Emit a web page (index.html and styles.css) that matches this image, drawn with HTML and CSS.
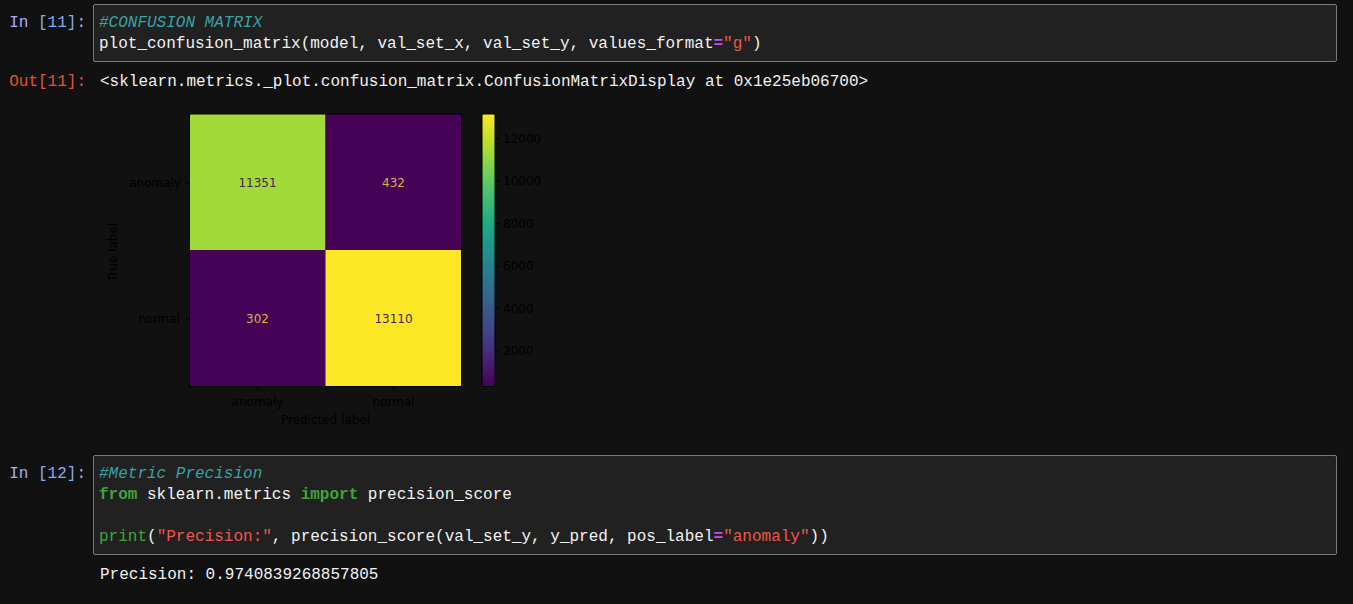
FILE: index.html
```html
<!DOCTYPE html>
<html>
<head>
<meta charset="utf-8">
<link rel="stylesheet" href="styles.css">
</head>
<body>
<div class="notebook">
  <div class="cell first">
    <div class="row">
      <div class="prompt in"><span class="pin">In </span><span class="pnum">[11]</span><span class="pin">:</span></div>
      <div class="input"><pre class="code"><span class="cm">#CONFUSION MATRIX</span>
plot_confusion_matrix(model, val_set_x, val_set_y, values_format<span class="op">=</span><span class="st">"g"</span>)</pre></div>
    </div>
    <div class="row outrow">
      <div class="prompt out">Out[11]:</div>
      <div class="output"><pre class="text">&lt;sklearn.metrics._plot.confusion_matrix.ConfusionMatrixDisplay at 0x1e25eb06700&gt;</pre></div>
    </div>
    <div class="row">
      <div class="prompt"></div>
      <div class="output">
        <svg class="plot" width="460" height="340" viewBox="100 96 460 340" xmlns="http://www.w3.org/2000/svg">
          <defs>
            <linearGradient id="viridis" x1="0" y1="1" x2="0" y2="0">
              <stop offset="0" stop-color="#440154"/>
              <stop offset="0.1" stop-color="#482475"/>
              <stop offset="0.2" stop-color="#414487"/>
              <stop offset="0.3" stop-color="#355f8d"/>
              <stop offset="0.4" stop-color="#2a788e"/>
              <stop offset="0.5" stop-color="#21918c"/>
              <stop offset="0.6" stop-color="#22a884"/>
              <stop offset="0.7" stop-color="#44bf70"/>
              <stop offset="0.8" stop-color="#7ad151"/>
              <stop offset="0.9" stop-color="#bddf26"/>
              <stop offset="1" stop-color="#fde725"/>
            </linearGradient>
          </defs>
          <rect x="189.5" y="114" width="136" height="136" fill="#a2da3a"/>
          <rect x="325.5" y="114" width="136" height="136" fill="#450256"/>
          <rect x="189.5" y="250" width="136" height="136.5" fill="#450256"/>
          <rect x="325.5" y="250" width="136" height="136.5" fill="#fde725"/>
          <rect x="189.5" y="114" width="272" height="272.5" fill="none" stroke="#000" stroke-width="1"/>
          <g class="num">
            <text x="257.5" y="183" fill="#4a1e5a">11351</text>
            <text x="393.5" y="183" fill="#d9b14a">432</text>
            <text x="257.5" y="319" fill="#d9b14a">302</text>
            <text x="393.5" y="319" fill="#4a1e5a">13110</text>
          </g>
          <g stroke="#000" stroke-width="1">
            <line x1="185.5" y1="183" x2="189.5" y2="183"/>
            <line x1="185.5" y1="319" x2="189.5" y2="319"/>
            <line x1="257.5" y1="386.5" x2="257.5" y2="390.5"/>
            <line x1="393.5" y1="386.5" x2="393.5" y2="390.5"/>
          </g>
          <g class="lbl">
            <text x="181" y="183" text-anchor="end">anomaly</text>
            <text x="180" y="319" text-anchor="end">normal</text>
            <text x="257.5" y="401.5" text-anchor="middle">anomaly</text>
            <text x="393.5" y="401.5" text-anchor="middle">normal</text>
            <text x="325.5" y="419.5" text-anchor="middle">Predicted label</text>
            <text x="112.5" y="252" text-anchor="middle" transform="rotate(-90 112.5 252)">True label</text>
          </g>
          <rect x="482" y="114" width="13" height="272.5" fill="url(#viridis)" stroke="#000" stroke-width="1"/>
          <g stroke="#000" stroke-width="1">
            <line x1="495" y1="138.5" x2="499" y2="138.5"/>
            <line x1="495" y1="181" x2="499" y2="181"/>
            <line x1="495" y1="223.5" x2="499" y2="223.5"/>
            <line x1="495" y1="266" x2="499" y2="266"/>
            <line x1="495" y1="308.5" x2="499" y2="308.5"/>
            <line x1="495" y1="351" x2="499" y2="351"/>
          </g>
          <g class="lbl">
            <text x="503" y="138.5">12000</text>
            <text x="503" y="181">10000</text>
            <text x="503" y="223.5">8000</text>
            <text x="503" y="266">6000</text>
            <text x="503" y="308.5">4000</text>
            <text x="503" y="351">2000</text>
          </g>
        </svg>
      </div>
    </div>
  </div>

  <div class="cell second">
    <div class="row">
      <div class="prompt in"><span class="pin">In </span><span class="pnum">[12]</span><span class="pin">:</span></div>
      <div class="input"><pre class="code"><span class="cm">#Metric Precision</span>
<span class="kw">from</span> sklearn.metrics <span class="kw">import</span> precision_score

<span class="bi">print</span>(<span class="st">"Precision:"</span>, precision_score(val_set_y, y_pred, pos_label<span class="op">=</span><span class="st">"anomaly"</span>))</pre></div>
    </div>
    <div class="row outrow last">
      <div class="prompt"></div>
      <div class="output"><pre class="text">Precision: 0.9740839268857805</pre></div>
    </div>
  </div>
</div>
</body>
</html>
```
FILE: styles.css
```css
html, body {
  margin: 0;
  padding: 0;
  background: #111111;
}

.notebook {
  padding: 4.3px 16px 0 0;
  font-family: "Liberation Mono", "DejaVu Sans Mono", monospace;
  font-size: 16px;
  line-height: 21.3px;
  color: #f2f2f2;
}

.row {
  display: flex;
  align-items: flex-start;
}

.prompt {
  flex: 0 0 93px;
  box-sizing: border-box;
  padding-right: 7px;
  text-align: right;
  white-space: pre;
}

.prompt.in {
  padding-top: 8.6px;
}

.pin {
  color: #a9acf2;
}

.pnum {
  color: #86a8f3;
}

.prompt.out {
  color: #e2542f;
}

.input {
  flex: 0 0 1244px;
  box-sizing: border-box;
  background: #212121;
  border: 1px solid #7a7a7a;
  border-radius: 2px;
  padding: 7.6px 5px 5.2px 5px;
}

pre {
  margin: 0;
  font: inherit;
}

.cm {
  color: #3aa2a6;
  font-style: italic;
}

.kw {
  color: #3fa43a;
  font-weight: bold;
}

.bi {
  color: #3fa43a;
}

.st {
  color: #f0574a;
}

.op {
  color: #c64cf0;
  font-weight: bold;
}

.outrow {
  margin-top: 10px;
}

.outrow.last {
  margin-top: 10.5px;
}

.output {
  padding-left: 7px;
}

.plot {
  display: block;
  margin-top: 3px;
}

.plot text {
  font-family: "DejaVu Sans", sans-serif;
  font-size: 12px;
  dominant-baseline: central;
}

.plot .lbl text {
  fill: #000000;
}

.plot .num text {
  text-anchor: middle;
}

.second {
  margin-top: 19px;
}
```
